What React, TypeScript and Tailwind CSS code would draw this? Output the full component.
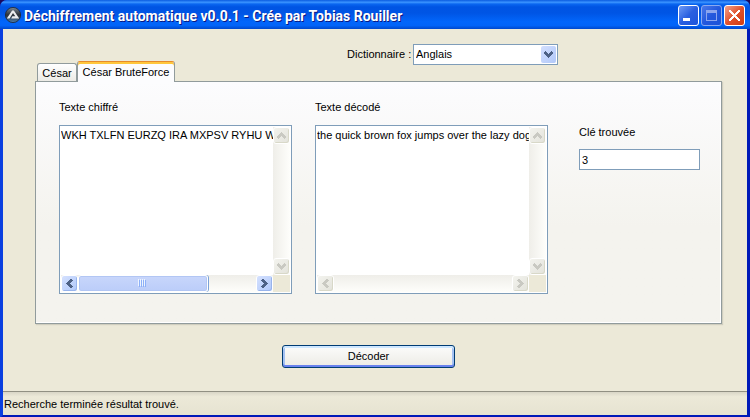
import { useState } from "react";
import type { ReactNode } from "react";
import clsx from "clsx";

type Direction = "up" | "down" | "left" | "right";

const rotation: Record<Direction, string> = {
  up: "rotate-180",
  down: "rotate-0",
  left: "rotate-90",
  right: "-rotate-90",
};

const Chevron = ({ dir }: { dir: Direction }) => (
  <svg
    width="9"
    height="9"
    viewBox="0 0 9 9"
    shapeRendering="crispEdges"
    className={rotation[dir]}
    aria-hidden="true"
  >
    <path
      d="M1 1h1v1h1v1h1v1h1v-1h1v-1h1v-1h1v1h1v2h-1v1h-1v1h-1v1h-1v1h-1v-1h-1v-1h-1v-1h-1v-1h-1v-2h1z"
      fill="currentColor"
    />
  </svg>
);

const ScrollButton = ({ dir, disabled }: { dir: Direction; disabled?: boolean }) => (
  <button
    type="button"
    disabled={disabled}
    aria-label={`Défiler ${dir}`}
    className={clsx(
      "flex size-[17px] shrink-0 items-center justify-center rounded-[3px] border border-white",
      disabled
        ? "bg-linear-to-br from-[#f3f3ee] to-[#e3e3db] text-[#c9c9c2] shadow-[inset_-1px_-1px_0_#d8d8c8]"
        : "bg-linear-to-br from-[#d5e1fe] to-[#b0c8fa] text-[#4d6185] shadow-[inset_-1px_-1px_0_#98b4ec]"
    )}
  >
    <Chevron dir={dir} />
  </button>
);

type MemoProps = {
  id: string;
  label: string;
  value: string;
  onChange: (value: string) => void;
  scrollable?: boolean;
};

const Memo = ({ id, label, value, onChange, scrollable }: MemoProps) => (
  <div className="min-w-0 flex-1">
    <label htmlFor={id} className="block h-[25px] leading-[14px]">
      {label}
    </label>
    <div className="grid h-[169px] grid-cols-[minmax(0,1fr)_17px] grid-rows-[minmax(0,1fr)_17px] border border-[#7f9db9] bg-white p-px">
      <textarea
        id={id}
        value={value}
        onChange={(e) => onChange(e.target.value)}
        wrap="off"
        spellCheck={false}
        className="resize-none overflow-hidden whitespace-pre bg-white py-px leading-[14px] outline-none"
      />
      <div className="flex flex-col justify-between bg-linear-to-r from-[#efeee9] to-[#fefefb]">
        <ScrollButton dir="up" disabled />
        <ScrollButton dir="down" disabled />
      </div>
      <div className="flex bg-linear-to-b from-[#efeee9] to-[#fefefb]">
        <ScrollButton dir="left" disabled={!scrollable} />
        <div className="flex-1">
          {scrollable && (
            <div className="flex h-[17px] w-[73%] items-center justify-center gap-px rounded-[3px] border border-white bg-linear-to-b from-[#c8d6fb] to-[#bbcdf9] shadow-[inset_0_0_0_1px_#b2c6f4,1px_0_0_#7ba2d8]">
              {[0, 1, 2, 3].map((n) => (
                <span key={n} className="h-[7px] w-px bg-[#8cb0f8] shadow-[-1px_-1px_0_#eef4fe]" />
              ))}
            </div>
          )}
        </div>
        <ScrollButton dir="right" disabled={!scrollable} />
      </div>
      <div className="bg-[#ece9d8]" />
    </div>
  </div>
);

const AppIcon = () => (
  <svg width="16" height="16" viewBox="0 0 16 16" aria-hidden="true">
    <defs>
      <linearGradient id="disc" x1="0" y1="0" x2="0" y2="1">
        <stop offset="0" stopColor="#7d8a96" />
        <stop offset="0.5" stopColor="#2b3036" />
        <stop offset="1" stopColor="#4d7fae" />
      </linearGradient>
    </defs>
    <circle cx="8" cy="8" r="7.6" fill="url(#disc)" stroke="#20262e" strokeWidth="0.8" />
    <path
      d="M1.8 11.4 6.8 3.9Q8 2.6 9.2 3.9l5 7.5H6.2l1.2-2.1h2.9L8 5.9l-3.5 5.5z"
      fill="#eceef0"
    />
  </svg>
);

const CaptionButton = ({
  label,
  className,
  children,
}: {
  label: string;
  className: string;
  children: ReactNode;
}) => (
  <button
    type="button"
    aria-label={label}
    className={clsx("flex size-[21px] items-center justify-center rounded-[3px] border", className)}
  >
    <svg width="19" height="19" viewBox="0 0 19 19" shapeRendering="crispEdges" aria-hidden="true">
      {children}
    </svg>
  </button>
);

const TitleBar = () => (
  <header className="flex h-[29px] items-center rounded-t-[7px] bg-[linear-gradient(to_bottom,#0a5be0_0%,#3a93ff_8%,#0a66f0_14%,#0054e3_24%,#0055e5_45%,#0266fb_75%,#0264f8_88%,#0048cc_100%)] px-[5px]">
    <AppIcon />
    <h1 className="ml-[3px] flex-1 truncate pt-0.5 font-[Roboto,sans-serif] text-[14px] leading-[20px] font-bold text-white [text-shadow:1px_1px_0_#0a1883]">
      Déchiffrement automatique v0.0.1 - Crée par Tobias Rouiller
    </h1>
    <div className="flex gap-0.5 pt-0.5">
      <CaptionButton
        label="Réduire"
        className="border-white bg-linear-to-br from-[#6f9af5] via-[#2a5fe0] to-[#1c55dc]"
      >
        <path d="M4 12h7v3H4z" fill="#fff" />
      </CaptionButton>
      <CaptionButton
        label="Agrandir"
        className="border-[#8aa9f0] bg-linear-to-br from-[#4a78ea] via-[#2358dd] to-[#1b52d8]"
      >
        <path d="M4 4h11v11H4zM5 7v7h9V7z" fill="#8ca6ee" fillRule="evenodd" />
      </CaptionButton>
      <CaptionButton
        label="Fermer"
        className="border-white bg-linear-to-br from-[#f0a08a] via-[#e0512c] to-[#cf3c10]"
      >
        <path
          d="M4 4h2v1h1v1h1v1h1v1h1v-1h1v-1h1v-1h1v-1h2v2h-1v1h-1v1h-1v1h-1v1h1v1h1v1h1v1h1v2h-2v-1h-1v-1h-1v-1h-1v-1h-1v1h-1v1h-1v1h-1v1h-2v-2h1v-1h1v-1h1v-1h1v-1h-1v-1h-1v-1h-1v-1h-1z"
          fill="#fff"
        />
      </CaptionButton>
    </div>
  </header>
);

const App = () => {
  const [cipher, setCipher] = useState("WKH TXLFN EURZQ IRA MXPSV RYHU WKH ODCB GRJ");
  const [plain, setPlain] = useState("the quick brown fox jumps over the lazy dog");
  const [foundKey, setFoundKey] = useState("3");

  return (
    <div className="bg-[#1b0a5e]">
      <div className="flex min-h-screen flex-col rounded-t-[7px] bg-[#0831d9] font-['Liberation_Sans',sans-serif] text-[11px] text-black">
        <TitleBar />

        <div className="flex flex-1 flex-col border-x-3 border-b-3 border-[#0a3fe0] border-r-[#0019b8] border-b-[#0019b8] bg-[#ece9d8]">
          <main className="flex-1 pt-[15px] pr-[25px] pb-[23px] pl-8">
            {/* Tabs and dictionary */}
            <div className="flex h-[37px]">
              <div role="tablist" className="z-10 flex items-end pl-0.5">
                <button
                  type="button"
                  role="tab"
                  aria-selected="false"
                  className="h-[18px] w-10 rounded-t-[3px] border border-b-0 border-[#919b9c] bg-linear-to-b from-white to-[#ecebe6] leading-[18px]"
                >
                  César
                </button>
                <button
                  type="button"
                  role="tab"
                  aria-selected="true"
                  className="-mb-px h-[21px] w-[98px] rounded-t-[3px] border border-t-[#e68b2c] border-r-[#919b9c] border-b-0 border-l-[#919b9c] bg-[#fcfcfe] leading-[18px] whitespace-nowrap shadow-[inset_0_2px_0_#ffc73c]"
                >
                  César BruteForce
                </button>
              </div>
              <div className="ml-[172px] flex h-[21px] items-center">
                <label htmlFor="dictionary" className="w-[66px] whitespace-nowrap">
                  Dictionnaire :
                </label>
                <div className="relative">
                  <select
                    id="dictionary"
                    defaultValue="Anglais"
                    className="block h-[21px] w-[145px] appearance-none border border-[#7f9db9] bg-white pl-0.5"
                  >
                    <option>Anglais</option>
                    <option>Français</option>
                  </select>
                  <span className="pointer-events-none absolute top-0.5 right-0.5 flex h-[17px] w-[15px] items-center justify-center rounded-xs bg-linear-to-br from-[#d3dffe] to-[#b1c8f9] text-[#4d6185]">
                    <Chevron dir="down" />
                  </span>
                </div>
              </div>
            </div>

            {/* Tab page */}
            <div
              role="tabpanel"
              className="flex gap-[23px] border border-[#919b9c] bg-linear-to-b from-[#fcfcfe] to-[#f4f3ee] to-60% pt-[18px] pr-[21px] pb-[29px] pl-[23px] shadow-[inset_-1px_-1px_0_#fff,1px_1px_1px_#d0cebf]"
            >
              <Memo
                id="cipher"
                label="Texte chiffré"
                value={cipher}
                onChange={setCipher}
                scrollable
              />
              <Memo id="plain" label="Texte décodé" value={plain} onChange={setPlain} />
              <div className="ml-2 w-[121px] pt-[25px]">
                <label htmlFor="key" className="block h-6 leading-[14px]">
                  Clé trouvée
                </label>
                <input
                  id="key"
                  value={foundKey}
                  onChange={(e) => setFoundKey(e.target.value)}
                  className="block h-[21px] w-full border border-[#7f9db9] bg-white px-0.5 outline-none"
                />
              </div>
            </div>

            <div className="flex justify-center pt-[21px] pr-5">
              <button
                type="button"
                className="h-[23px] w-[173px] rounded-[3px] border border-[#003c74] bg-linear-to-b from-[#fcfcfb] to-[#ecebe5] shadow-[inset_0_2px_0_#cee7ff,inset_0_-2px_0_#6982ee,inset_2px_0_0_#a4c1f2,inset_-2px_0_0_#a4c1f2]"
              >
                Décoder
              </button>
            </div>
          </main>

          <footer className="flex h-6 items-center border-t border-[#919083] bg-linear-to-b from-[#d9d6c7] via-[#ece9d8] via-20% to-[#e6e3d1] px-px pt-0.5">
            <p role="status">Recherche terminée résultat trouvé.</p>
          </footer>
        </div>
      </div>
    </div>
  );
};

export default App;
